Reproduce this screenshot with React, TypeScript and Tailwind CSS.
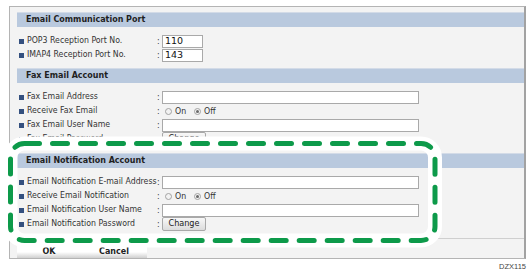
import React from "react";

const FONT = "font-['DejaVu_Sans_Condensed','DejaVu_Sans',sans-serif]";

function Header({ title }: { title: string }) {
  return (
    <div className="h-[15px] bg-[#b9c9de] border-t border-t-[#d3dbe7] flex items-center pl-[9px] text-[8.9px] font-bold text-[#1f1f1f]">
      {title}
    </div>
  );
}

function Row({ label, children }: { label: string; children: React.ReactNode }) {
  return (
    <div className="h-[14px] flex items-center ml-[2px]">
      <span className="w-[5px] h-[5px] bg-[#34507f] mr-[3px] shrink-0" />
      <span className="w-[130px] shrink-0 whitespace-nowrap text-[8.7px] text-[#333]">{label}</span>
      <span className="w-[5px] shrink-0 text-[8.7px] text-[#333] leading-none">:</span>
      {children}
    </div>
  );
}

function Input({ value, wide }: { value?: string; wide?: boolean }) {
  return (
    <div
      className={`h-[13px] ${wide ? "w-[257px]" : "w-[41px]"} border border-[#a9a9a9] bg-white pl-[2px] flex items-center text-[9.5px] text-[#111] font-['DejaVu_Sans',sans-serif]`}
    >
      {value}
    </div>
  );
}

function Radio({ checked, label }: { checked?: boolean; label: string }) {
  return (
    <span className="flex items-center mr-[8px]">
      <span className="w-[7px] h-[7px] rounded-full border border-[#a3a3a3] bg-[#f2f2f2] flex items-center justify-center mr-[3px]">
        {checked && <span className="w-[3px] h-[3px] rounded-full bg-[#6a6a6a]" />}
      </span>
      <span className="text-[8.7px] text-[#333] mt-[2px]">{label}</span>
    </span>
  );
}

function OnOff() {
  return (
    <div className="flex items-center pl-[3px]">
      <Radio label="On" />
      <Radio label="Off" checked />
    </div>
  );
}

function ChangeButton() {
  return (
    <div className="h-[14px] w-[44px] border border-[#a8a8a8] rounded-[2px] bg-gradient-to-b from-[#f8f8f8] to-[#dcdcdc] flex items-center justify-center text-[9px] text-[#222]">
      Change
    </div>
  );
}

export default function App() {
  return (
    <div className={`relative w-[530px] h-[279px] bg-white pt-[6px] pl-[9px] ${FONT}`}>
      <div className="w-[517px] h-[253px] border border-[#b4b4b4] border-r-2 border-r-[#a2a2a2] bg-[#f3f3f3] pl-[7px] pt-[5px] flex flex-col">
        <Header title="Email Communication Port" />
        <div className="pt-[7px]">
          <Row label="POP3 Reception Port No.">
            <Input value="110" />
          </Row>
          <Row label="IMAP4 Reception Port No.">
            <Input value="143" />
          </Row>
        </div>

        <div className="mt-[6px]">
          <Header title="Fax Email Account" />
        </div>
        <div className="pt-[7px]">
          <Row label="Fax Email Address">
            <Input wide />
          </Row>
          <Row label="Receive Fax Email">
            <OnOff />
          </Row>
          <Row label="Fax Email User Name">
            <Input wide />
          </Row>
          <Row label="Fax Email Password">
            <ChangeButton />
          </Row>
        </div>

        <div className="mt-[7px]">
          <Header title="Email Notification Account" />
        </div>
        <div className="pt-[7px]">
          <Row label="Email Notification E-mail Address">
            <Input wide />
          </Row>
          <Row label="Receive Email Notification">
            <OnOff />
          </Row>
          <Row label="Email Notification User Name">
            <Input wide />
          </Row>
          <Row label="Email Notification Password">
            <ChangeButton />
          </Row>
        </div>

        <div className="mt-[7px] border-t border-[#cfcfcf]" />
        <div className="mt-[7px] flex">
          <div className="w-[64px] h-[12px] bg-gradient-to-b from-white via-white to-[#d0d0d0] flex items-center justify-center text-[8.9px] font-bold text-[#222]">
            OK
          </div>
          <div className="w-[66px] h-[12px] bg-gradient-to-b from-white via-white to-[#d0d0d0] flex items-center justify-center text-[8.9px] font-bold text-[#222]">
            Cancel
          </div>
        </div>
      </div>
      <div className="w-[517px] text-right mt-[2px] text-[7.5px] text-[#444] font-['Liberation_Sans',sans-serif]">
        DZX115
      </div>

      {/* highlight callout */}
      <svg className="absolute left-0 top-0 pointer-events-none" width="530" height="279">
        <rect x="10.5" y="143.5" width="424.5" height="97" rx="14" fill="none" stroke="#ffffff" strokeWidth="14" />
        <rect
          x="10.5"
          y="143.5"
          width="424.5"
          height="97"
          rx="14"
          fill="none"
          stroke="#0d9a4a"
          strokeWidth="5"
          strokeDasharray="15 13"
          strokeLinecap="round"
        />
      </svg>
    </div>
  );
}
